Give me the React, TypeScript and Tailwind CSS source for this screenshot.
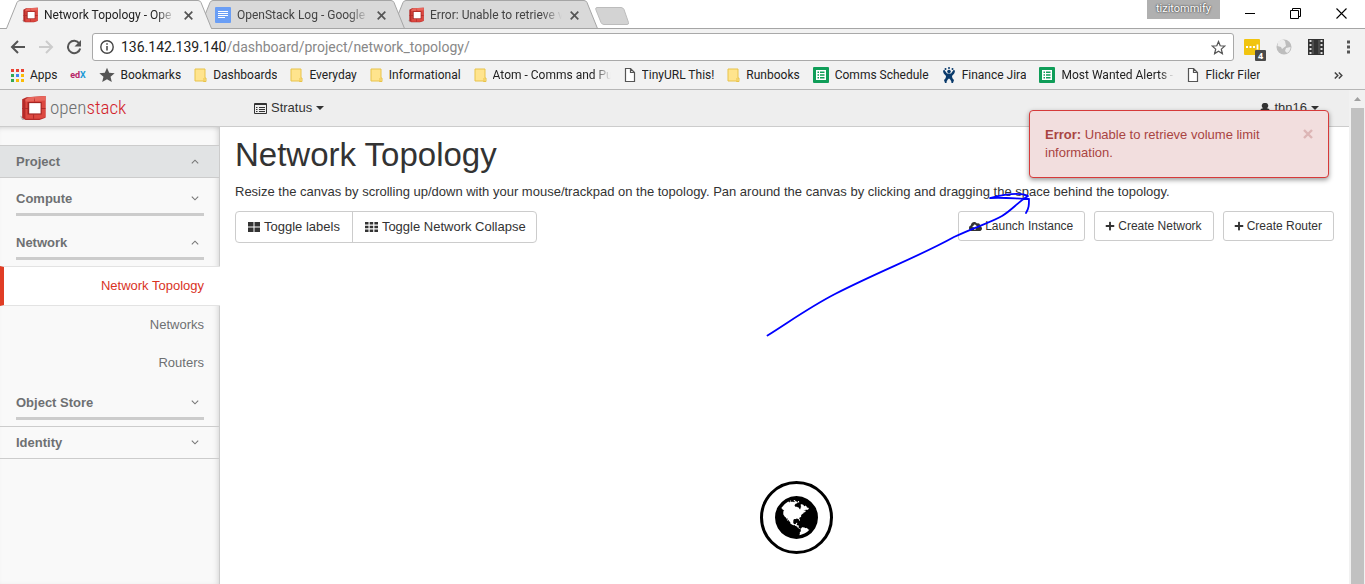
import React from "react";
import { FaPlus, FaCloudUploadAlt } from "react-icons/fa";

function CubeLogo({ className }: { className: string }) {
  return (
    <svg viewBox="0 0 24 24" className={className} aria-hidden="true">
      <path d="M0 19l4 2v2H2z" fill="#b5b5b5" />
      <path d="M2 4l4-2 17.500-1v20L18 23H5l-3-2z" fill="#b52a28" />
      <path d="M5 4l18.500-3v19.500L18 22H5z" fill="#dc4840" />
      <path d="M5 4l3-2 15.500-1v4L5 6z" fill="#e8675d" />
      <path d="M2 12h6v1H2zM19 12h4.500v1H19zM13 2l1 4h-1zM12 18h1v4h-1z" fill="#b02c2a" />
      <path d="M7 6.500h13V18H7z" fill="#a12321" />
      <path d="M8.500 7.500H19V17H8.500z" fill="#fff" />
    </svg>
  );
}

function FolderIcon() {
  return (
    <svg viewBox="0 0 13 15" className="h-[15px] w-[13px] shrink-0" aria-hidden="true">
      <path d="M1 1h10v9h1v3.500h-2.500v-.5H1z" fill="#ffe48d" stroke="#e8c34a" />
      <path d="M10 10v3.500" stroke="#e8c34a" />
    </svg>
  );
}

function PageIcon() {
  return (
    <svg viewBox="0 0 12 14" className="h-[14px] w-3 shrink-0" aria-hidden="true">
      <path d="M1.500.5h5l4 4v9h-9zM6.500.5v4h4" fill="#fff" stroke="#555" strokeWidth="1.200" />
    </svg>
  );
}

function SheetIcon() {
  return (
    <svg viewBox="0 0 16 16" className="size-4 shrink-0" aria-hidden="true">
      <rect width="16" height="16" rx="1" fill="#0f9d58" />
      <path d="M3 3h10v10H3z" fill="#fff" />
      <path d="M4.500 4.500H6V6H4.500zM7 4.500h4.500V6H7zM4.500 7.200H6v1.500H4.500zM7 7.200h4.500v1.500H7zM4.500 10H6v1.500H4.500zM7 10h4.500v1.500H7z" fill="#0f9d58" />
    </svg>
  );
}

function JiraIcon() {
  return (
    <svg viewBox="0 0 14 16" className="h-4 w-[14px] shrink-0" aria-hidden="true">
      <g fill="#0a3a6b">
        <circle cx="3.500" cy="2" r="1" />
        <circle cx="7" cy="1" r="1" />
        <circle cx="10.500" cy="2" r="1" />
        <circle cx="7" cy="4.500" r="1.800" />
        <path d="M1 3.500l1.500-.5 2.500 3.500h4L11.500 3l1.500.5c0 2.500-1.500 4-3 5.500 0 2 1 3 2 4l-1 3H9.500c0-2-1-3.500-2.500-4.500-1.500 1-2.500 2.500-2.500 4.500H3l-1-3c1-1 2-2 2-4C2.500 7.500 1 6 1 3.500z" />
      </g>
    </svg>
  );
}

function AppsIcon() {
  const colors = ["#ea4335", "#ea4335", "#ea4335", "#34a853", "#4285f4", "#fbbc05", "#34a853", "#fbbc05", "#fbbc05"];
  return (
    <svg viewBox="0 0 13 13" className="size-[13px] shrink-0" aria-hidden="true">
      {colors.map((c, i) => (
        <rect key={i} x={(i % 3) * 5} y={Math.floor(i / 3) * 5} width="3" height="3" fill={c} />
      ))}
    </svg>
  );
}

function StarIcon() {
  return (
    <svg viewBox="0 0 24 24" className="size-4 shrink-0" aria-hidden="true">
      <path d="M12 1l3.300 7.500 8.200.7-6.200 5.400 1.900 8L12 18.300l-7.200 4.300 1.900-8L.5 9.200l8.200-.7z" fill="#555" />
    </svg>
  );
}

function DocIcon() {
  return (
    <svg viewBox="0 0 16 16" className="size-4 shrink-0" aria-hidden="true">
      <rect width="16" height="16" rx="1" fill="#6a9ef5" />
      <path d="M3 4.500h10M3 6.500h10M3 8.500h10M3 10.500h7" stroke="#fff" />
    </svg>
  );
}

type TabProps = { title: string; icon: React.ReactNode; active?: boolean; layer: string };

function Tab({ title, icon, active, layer }: TabProps) {
  return (
    <div className={`relative -ml-[13px] flex h-[29px] w-[206px] items-center pt-[1px] pl-4 ${layer}`}>
      <svg viewBox="0 0 206 29" className="absolute inset-0 h-[29px] w-[206px]" aria-hidden="true">
        <path d="M.5 28.500L11 2.500Q12 .5 14 .5H192Q194 .5 195 2.500L205.500 28.500" fill={active ? "#f2f2f2" : "#d9d9d9"} stroke="#a5a5a5" />
        {active ? <path d="M1 28.500h204" stroke="#f2f2f2" /> : <path d="M0 28.500h206" stroke="#a5a5a5" />}
      </svg>
      <span className="relative">{icon}</span>
      <span className={`relative ml-[6px] w-[132px] overflow-hidden whitespace-nowrap [mask-image:linear-gradient(to_right,#000_85%,transparent)] ${active ? "text-[#222]" : "text-[#444]"}`}>
        {title}
      </span>
      <button type="button" aria-label="Close tab" className="relative ml-2">
        <svg viewBox="0 0 9 9" className="size-[9px]" aria-hidden="true">
          <path d="M.7.7l7.600 7.600M8.300.7L.7 8.300" stroke="#555" strokeWidth="1.700" />
        </svg>
      </button>
    </div>
  );
}

const bookmarks: { label: string; icon: React.ReactNode; fade?: string }[] = [
  { label: "Bookmarks", icon: <StarIcon /> },
  { label: "Dashboards", icon: <FolderIcon /> },
  { label: "Everyday", icon: <FolderIcon /> },
  { label: "Informational", icon: <FolderIcon /> },
  { label: "Atom - Comms and Pu", icon: <FolderIcon />, fade: "w-[118px] [mask-image:linear-gradient(to_right,#000_85%,transparent)]" },
  { label: "TinyURL This!", icon: <PageIcon /> },
  { label: "Runbooks", icon: <FolderIcon /> },
  { label: "Comms Schedule", icon: <SheetIcon /> },
  { label: "Finance Jira", icon: <JiraIcon /> },
  { label: "Most Wanted Alerts -", icon: <SheetIcon />, fade: "w-[113px] [mask-image:linear-gradient(to_right,#000_88%,transparent)]" },
  { label: "Flickr Filer", icon: <PageIcon /> },
];

function BrowserChrome() {
  return (
    <div className="font-[Roboto,sans-serif] text-xs text-[#222]">
      <div className="relative flex h-[29px] bg-white pl-[19px]">
        <div className="absolute inset-x-0 bottom-0 h-px bg-[#a5a5a5]" />
        <Tab title="Network Topology - Ope" icon={<CubeLogo className="size-4" />} active layer="z-30" />
        <Tab title="OpenStack Log - Google" icon={<DocIcon />} layer="z-20" />
        <Tab title="Error: Unable to retrieve v" icon={<CubeLogo className="size-4" />} layer="z-10" />
        <button type="button" aria-label="New tab" className="relative mt-[7px] -ml-[3px] h-[18px]">
          <svg viewBox="0 0 34 18" className="h-[18px] w-[34px]" aria-hidden="true">
            <path d="M2 .5h24q2 0 3 2l4.500 13q.5 2-1.500 2H9q-2 0-3-2L.8 2.500Q.3.5 2 .5z" fill="#d3d3d3" stroke="#bcbcbc" />
          </svg>
        </button>
        <div className="ml-auto flex h-[19px] w-[73px] items-center justify-center bg-[#b0b0b0] text-[11px] text-white [text-shadow:0_0_2px_#000]">
          tizitommify
        </div>
        <div className="flex h-[26px] items-center gap-[35px] pr-[18px] pl-6">
          <button type="button" aria-label="Minimize">
            <svg viewBox="0 0 11 11" className="size-[11px]" aria-hidden="true"><path d="M1 5.500h10" stroke="#000" /></svg>
          </button>
          <button type="button" aria-label="Restore">
            <svg viewBox="0 0 11 11" className="size-[11px]" aria-hidden="true"><path d="M.5 2.500h8v8h-8zM2.500 2.500v-2h8v8h-2" fill="none" stroke="#000" /></svg>
          </button>
          <button type="button" aria-label="Close">
            <svg viewBox="0 0 11 11" className="size-[11px]" aria-hidden="true"><path d="M.5.500l10 10M10.500.500l-10 10" stroke="#000" strokeWidth="1.100" /></svg>
          </button>
        </div>
      </div>

      <div className="flex h-[36px] items-center bg-[#f2f2f2] pr-3 pl-[10px]">
        <button type="button" aria-label="Back">
          <svg viewBox="0 0 16 16" className="size-4" aria-hidden="true"><path d="M15 8H2M8 2L2 8l6 6" fill="none" stroke="#555" strokeWidth="2" /></svg>
        </button>
        <button type="button" aria-label="Forward" className="ml-3">
          <svg viewBox="0 0 16 16" className="size-4" aria-hidden="true"><path d="M1 8h13M8 2l6 6-6 6" fill="none" stroke="#ccc" strokeWidth="2" /></svg>
        </button>
        <button type="button" aria-label="Reload" className="ml-3">
          <svg viewBox="0 0 16 16" className="size-4" aria-hidden="true">
            <path d="M13.300 4.500A6.200 6.200 0 1 0 14.200 9.500" fill="none" stroke="#555" strokeWidth="2" />
            <path d="M15 1v6.500H8.500z" fill="#555" />
          </svg>
        </button>
        <div className="ml-[10px] flex h-7 min-w-0 flex-1 items-center rounded-[3px] border border-[#a9a9a9] bg-white pr-[7px] pl-[7px]">
          <svg viewBox="0 0 14 14" className="size-[14px]" aria-hidden="true">
            <circle cx="7" cy="7" r="6.200" fill="none" stroke="#444" strokeWidth="1.400" />
            <path d="M7 6v4.500M7 3.300v1.500" stroke="#444" strokeWidth="1.500" />
          </svg>
          <div className="ml-[7px] flex-1 text-sm text-[#888]">
            <span className="text-[#222]">136.142.139.140</span>/dashboard/project/network_topology/
          </div>
          <svg viewBox="0 0 24 24" className="size-[15px]" aria-hidden="true">
            <path d="M12 2.500l2.700 6.700 7.300.6-5.500 4.800 1.700 7.100L12 17.900l-6.200 3.800 1.700-7.100L2 9.800l7.300-.6z" fill="none" stroke="#555" strokeWidth="2" />
          </svg>
        </div>
        <svg viewBox="0 -6 23 28" className="ml-[9px] h-7 w-[23px]" aria-hidden="true">
          <rect x="1" width="16" height="16" rx="1" fill="#f1c40f" />
          <path d="M3 8h2M6.500 8h2M10 8h2M14.500 5.500v5" stroke="#fff" strokeWidth="1.800" />
          <rect x="12" y="11" width="11" height="11" rx="1" fill="#4a4a4a" />
          <text x="15" y="20" fill="#fff" fontSize="9" fontWeight="700" fontFamily="Open Sans">4</text>
        </svg>
        <svg viewBox="0 0 16 16" className="ml-[10px] size-4" aria-hidden="true">
          <circle cx="8" cy="8" r="7.500" fill="#bdbdbd" />
          <path d="M2 3q4-4 7-1l1 5-4 3L5 8 1.500 7zM10 9l4.500-1q0 4-3.500 6l-2-2z" fill="#ededed" />
        </svg>
        <svg viewBox="0 0 16 16" className="ml-4 size-4" aria-hidden="true">
          <path d="M0 0h16v16H0z" fill="#333" />
          <path d="M2.500 1v14M13.500 1v14" stroke="#ddd" strokeWidth="2" strokeDasharray="2 2" />
          <path d="M5 1v14M11 1v14" stroke="#666" />
        </svg>
        <svg viewBox="0 0 3 14" className="mr-[3px] ml-[23px] h-[14px] w-[3px]" aria-hidden="true">
          <path d="M0 .5h3v3H0zM0 5.500h3v3H0zM0 10.500h3v3H0z" fill="#555" />
        </svg>
      </div>

      <nav aria-label="Bookmarks" className="flex h-[25px] items-center gap-[13px] border-b border-[#b6b6b6] bg-[#f2f2f2] pb-1 pl-[11px]">
        <a href="#apps" className="flex items-center gap-[6px]"><AppsIcon />Apps</a>
        <a href="#edx" className="flex w-[15px] justify-center text-[9px] font-bold text-[#b72667]">ed<span className="text-[#1e9ad6]">X</span></a>
        {bookmarks.map((b) => (
          <a key={b.label} href="#bookmark" className="flex items-center gap-[6px] whitespace-nowrap">
            {b.icon}
            <span className={`overflow-hidden ${b.fade ?? ""}`}>{b.label}</span>
          </a>
        ))}
        <button type="button" aria-label="More bookmarks" className="mr-[22px] ml-auto">
          <svg viewBox="0 0 9 7" className="h-[7px] w-[9px]" aria-hidden="true"><path d="M.8.5l3 3-3 3M4.800.5l3 3-3 3" fill="none" stroke="#444" strokeWidth="1.500" /></svg>
        </button>
      </nav>
    </div>
  );
}

function Chevron({ up }: { up?: boolean }) {
  return (
    <svg viewBox="0 0 8 5" className="h-[5px] w-2" aria-hidden="true">
      <path d={up ? "M.8 4.300L4 1.200l3.200 3.100" : "M.8.700L4 3.800 7.200.7"} fill="none" stroke="#777" strokeWidth="1.100" />
    </svg>
  );
}

function Caret() {
  return (
    <svg viewBox="0 0 8 4" className="h-1 w-2" aria-hidden="true"><path d="M0 0h8L4 4z" fill="#333" /></svg>
  );
}

function Group({ label, open }: { label: string; open?: boolean }) {
  return (
    <button type="button" aria-expanded={!!open} className="mr-[15px] ml-4 flex h-[38px] items-center justify-between border-b-[3px] border-[#ccc] pt-[6px] pr-[5px] font-bold">
      {label}
      <Chevron up={open} />
    </button>
  );
}

function Sidebar() {
  return (
    <nav aria-label="Project" className="flex w-[220px] shrink-0 flex-col border-r border-[#ccc] bg-[#f9f9f9] pt-[18px] text-[#6e7072] shadow-[inset_-4px_0_6px_-3px_#00000022,inset_0_4px_5px_-3px_#00000022]">
      <button type="button" aria-expanded="true" className="flex h-[33px] items-center justify-between border-y border-[#ccc] bg-[#e1e3e4] pr-5 pl-4 font-bold">
        Project
        <Chevron up />
      </button>
      <div className="flex flex-col gap-[6px]">
        <Group label="Compute" />
        <Group label="Network" open />
      </div>
      <a href="#topology" className="mt-[6px] -mr-px flex h-10 items-center justify-end border-y border-l-4 border-y-[#e3e3e3] border-l-[#e03d25] bg-white pr-4 text-[#d9331f]">
        Network Topology
      </a>
      <a href="#networks" className="flex h-[38px] items-center justify-end pr-[15px]">Networks</a>
      <a href="#routers" className="flex h-[38px] items-center justify-end pr-[15px]">Routers</a>
      <Group label="Object Store" />
      <button type="button" aria-expanded="false" className="mt-[6px] flex h-[33px] items-center justify-between border-y border-[#ccc] pr-5 pl-4 font-bold">
        Identity
        <Chevron />
      </button>
    </nav>
  );
}

const actionClass = "flex h-[30px] items-center gap-[3px] rounded-[3px] border border-[#ccc] bg-white pr-[11px] pl-[10px] text-xs";

function GlobeNode() {
  return (
    <div className="absolute top-[354px] left-[540px] flex size-[73px] items-center justify-center rounded-full border-[3px] border-black">
      <svg viewBox="0 128 1536 1536" className="size-[43px]" role="img" aria-label="External network">
        <path d="M768 128q209 0 385.500 103t279.500 279.500 103 385.500-103 385.500-279.500 279.500-385.500 103-385.500-103-279.500-279.500-103-385.500 103-385.500 279.500-279.500 385.500-103zm274 521q-2 1-9.500 9.500t-13.500 9.500q2 0 4.500-5t5-11 3.500-7q6-7 22-15 14-6 52-12 34-8 51 11-2-2 9.500-13t14.500-12q3-2 15-4.500t15-7.500l2-22q-12 1-17.500-7t-6.500-21q0 2-6 8 0-7-4.500-8t-11.500 1-9 1q-10-3-15-7.500t-8-16.500-4-15q-2-5-9.500-11t-9.500-10q-1-2-2.500-5.500t-3-6.500-4-5.500-5.500-2.500-7 5-7.500 10-4.500 5q-3-2-6-1.500t-4.500 1-4.500 3-5 3.500q-3 2-8.500 3t-8.500 2q15-5-1-11-10-4-16-3 9-4 7.500-12t-8.500-14h5q-1-4-8.500-8.500t-17.500-8.500-13-6q-8-5-34-9.500t-33-.5q-5 6-4.500 10.500t4 14 3.500 12.500q1 6-5.500 13t-6.500 12q0 7 14 15.500t10 21.500q-3 8-16 16t-16 12q-5 8-1.500 18.500t10.500 16.500q2 2 1.500 4t-3.500 4.500-5.500 4-6.500 3.500l-3 2q-11 5-20.500-6t-13.500-26q-7-25-16-30-23-8-29 1-5-13-41-26-25-9-58-4 6-1 0-15-7-15-19-12 3-6 4-17.500t1-13.500q3-13 12-23 1-1 7-8.500t9.500-13.500.5-6q35 4 50-11 5-5 11.500-17t10.500-17q9-6 14-5.500t14.500 5.500 14.500 5q14 1 15.500-11t-7.500-20q12 1 3-17-4-7-8-9-12-4-27 5-8 4 2 8-1-1-9.500 10.500t-16.500 17.500-16-5q-1-1-5.500-13.500t-9.500-13.500q-8 0-16 15 3-8-11-15t-24-8q19-12-8-27-7-4-20.500-5t-19.500 4q-5 7-5.500 11.500t5 8 10.500 5.500 11.500 4 8.500 3q14 10 8 14-2 1-8.500 3.500t-11.500 4.500-6 4q-3 4 0 14t-2 14q-5-5-9-17.500t-7-16.500q7 9-25 6l-10-1q-4 0-16 2t-20.500 1-13.500-8q-4-8 0-20 1-4 4-2-4-3-11-9.500t-10-8.500q-46 15-94 41 6 1 12-1 5-2 13-6.500t10-5.500q34-14 42-7l5-5q14 16 20 25-7-4-30-1-20 6-22 12 7 12 5 18-4-3-11.500-10t-14.500-11-15-5q-16 0-22 1-146 80-235 222 7 7 12 8 4 1 5 9t2.500 11 11.500-3q9 8 3 19 1-1 44 27 19 17 21 21 3 11-10 18-1-2-9-9t-9-4q-3 5 .5 18.500t10.500 12.500q-7 0-9.500 16t-2.500 35.500-1 23.500l2 1q-3 12 5.500 34.500t21.500 19.500q-13 3 20 43 6 8 8 9 3 2 12 7.500t15 10 10 10.500q4 5 10 22.500t14 23.500q-2 6 9.500 20t10.500 23q-1 0-2.500 1t-2.500 1q3 7 15.500 14t15.500 13q1 3 2 10t3 11 8 2q2-20-24-62-15-25-17-29-3-5-5.500-15.500t-4.500-14.500q2 0 6 1.500t8.500 3.500 7.500 4 2 3q-3 7 2 17.500t12 18.500 17 19 12 13q6 6 14 19.500t0 13.500q9 0 20 10.500t17 19.500q5 8 8 26t5 24q2 7 8.500 13.500t12.500 9.500l16 8 13 7q5 2 18.500 10.500t21.500 11.500q10 4 16 4t14.500-2.500 13.500-3.500q15-2 29 15t21 21q36 19 55 11-2 1 .5 7.500t8 15.500 9 14.500 5.500 8.500q5 6 18 15t18 15q6-4 7-9-3 8 7 20t18 10q14-3 14-32-31 15-49-18 0-1-2.500-5.500t-4-8.500-2.500-8.500 0-7.500 5-3q9 0 10-3.500t-2-12.500-4-13q-1-8-11-20t-12-15q-5 9-16 8t-16-9q0 1-1.500 5.500t-1.500 6.500q-13 0-15-1 1-3 2.500-17.500t3.500-22.500q1-4 5.500-12t7.500-14.500 4-12.500-4.500-9.500-17.500-2.500q-19 1-26 20-1 3-3 10.500t-5 11.500-9 7q-7 3-24 2t-24-5q-13-8-22.500-29t-9.500-37q0-10 2.500-26.500t3-25-5.500-24.500q3-2 9-9.500t10-10.500q2-1 4.500-1.500t4.500 0 4-1.500 3-6q-1-1-4-3-3-3-4-3 7 3 28.500-1.500t27.500 1.500q15 11 22-2 0-1-2.500-9.500t-.5-13.500q5 27 29 9 3 3 15.500 5t17.500 5q3 2 7 5.500t5.500 4.500 5-.5 8.500-6.500q10 14 12 24 11 40 19 44 7 3 11 2t4.500-9.500 0-14-1.500-12.500l-1-8v-18l-1-8q-15-3-18.500-12t1.500-18.500 15-18.500q1-1 8-3.500t15.500-6.500 12.500-8q21-19 15-35 7 0 11-9-1 0-5-3t-7.500-5-4.500-2q9-5 2-16 5-3 7.500-11t7.500-10q9 12 21 2 7-8 1-16 5-7 20.500-10.500t18.500-9.500q7 2 8-2t1-12 3-12q4-5 15-9t13-5l17-11q3-4 0-4 18 2 31-11 10-11-6-20 3-6-3-9.500t-15-5.500q3-1 11.500-.5t10.500-1.500q15-10-7-16-17-5-43 12zm-163 877q206-36 351-189-3-3-12.500-4.500t-12.500-3.500q-18-7-24-8 1-7-2.500-13t-8-9-12.500-8-11-7q-2-2-7-6t-7-5.500-7.500-4.500-8.500-2-10 1l-3 1q-3 1-5.500 2.500t-5.500 3-4 3 0 2.500q-21-17-36-22-5-1-11-5.500t-10.500-7-10-1.500-11.500 7q-5 5-6 15t-2 13q-7-5 0-17.500t2-18.500q-3-6-10.500-4.500t-12 4.500-11.500 8.500-9 6.500-8.500 5.500-8.500 7.500q-3 4-6 12t-5 11q-2-4-11.500-6.500t-9.500-5.500q2 10 4 35t5 38q7 31-12 48-27 25-29 40-4 22 12 26 0 7-8 20.500t-7 21.500q0 6 2 16z" />
      </svg>
    </div>
  );
}

export default function App() {
  return (
    <div className="relative flex min-h-screen flex-col overflow-hidden bg-white font-['Liberation_Sans',Arial,sans-serif] text-[13px] leading-[18px] text-[#333]">
      <BrowserChrome />
      <div className="flex flex-1">
        <div className="flex min-w-0 flex-1 flex-col">
          <header className="flex h-[37px] shrink-0 items-center border-b border-[#ccc] bg-[#eee] pl-5">
            <a href="#home" className="flex w-[234px] items-center gap-1">
              <CubeLogo className="size-[26px]" />
              <span className="font-['Roboto_Condensed','Open_Sans_Condensed',sans-serif] text-[19px] font-light text-[#6d6e70]">
                open<span className="text-[#d2232a]">stack</span>
              </span>
            </a>
            <button type="button" className="flex items-center gap-1">
              <svg viewBox="0 0 13 11" className="h-[11px] w-[13px]" aria-hidden="true">
                <path d="M.5.5h12v10H.5z" fill="none" stroke="#333" />
                <path d="M1 1.500h11M2 4.500h1.500M5 4.500h6M2 6.500h1.500M5 6.500h6M2 8.500h1.500M5 8.500h6" stroke="#333" />
              </svg>
              Stratus
              <Caret />
            </button>
            <button type="button" className="mr-[30px] ml-auto flex items-center gap-1">
              <svg viewBox="0 0 10 11" className="h-[11px] w-[10px]" aria-hidden="true">
                <path d="M5 0a2.800 2.800 0 0 1 1.800 5.200Q10 5.500 10 9q0 2-1.500 2h-7Q0 11 0 9q0-3.500 3.200-3.800A2.800 2.800 0 0 1 5 0z" fill="#333" />
              </svg>
              thn16
              <Caret />
            </button>
          </header>
          <div className="flex flex-1">
            <Sidebar />
            <main className="relative min-w-0 flex-1 px-[15px]">
              <h1 className="pt-2 text-[33px] leading-10">Network Topology</h1>
              <p className="pt-2 whitespace-nowrap">
                Resize the canvas by scrolling up/down with your mouse/trackpad on the topology. Pan around the canvas by clicking and dragging the space behind the topology.
              </p>
              <div className="flex items-start justify-between pt-[10px]">
                <div className="flex h-8 rounded-[4px] border border-[#ccc]">
                  <button type="button" className="flex items-center gap-1 border-r border-[#ccc] px-3">
                    <svg viewBox="0 0 12 10" className="h-[10px] w-3" aria-hidden="true"><path d="M0 0h5.500v4.500H0zM6.500 0H12v4.500H6.500zM0 5.500h5.500V10H0zM6.500 5.500H12V10H6.500z" fill="#333" /></svg>
                    Toggle labels
                  </button>
                  <button type="button" className="flex items-center gap-1 pr-[10px] pl-3">
                    <svg viewBox="0 0 13 10" className="h-[10px] w-[13px]" aria-hidden="true"><path d="M0 0h3.500v2.600H0zM4.700 0h3.500v2.600H4.700zM9.400 0H13v2.600H9.400zM0 3.700h3.500v2.600H0zM4.700 3.700h3.500v2.600H4.700zM9.400 3.700H13v2.600H9.400zM0 7.400h3.500V10H0zM4.700 7.400h3.500V10H4.700zM9.400 7.400H13V10H9.400z" fill="#333" /></svg>
                    Toggle Network Collapse
                  </button>
                </div>
                <div className="flex gap-[9px]">
                  <button type="button" className={actionClass}><FaCloudUploadAlt className="size-[13px]" />Launch Instance</button>
                  <button type="button" className={actionClass}><FaPlus className="size-[10px]" />Create Network</button>
                  <button type="button" className={actionClass}><FaPlus className="size-[10px]" />Create Router</button>
                </div>
              </div>
              <GlobeNode />
            </main>
          </div>
        </div>
        <div className="flex w-4 shrink-0 flex-col items-center bg-[#f1f1f1]" aria-hidden="true">
          <svg viewBox="0 0 7 4" className="my-[7px] h-1 w-[7px] shrink-0"><path d="M0 4h7L3.500 0z" fill="#a0a0a0" /></svg>
          <div className="w-[13px] flex-1 bg-[#c1c1c1]" />
        </div>
      </div>

      <div role="alert" className="absolute top-[110px] right-9 z-40 flex h-[68px] w-[300px] items-start rounded-[4px] border border-[#d63a3a] bg-[#f2dede] py-[15px] pr-[15px] pl-[15px] text-[#a94442] shadow-[0_2px_5px_#00000066]">
        <p className="flex-1"><strong>Error:</strong> Unable to retrieve volume limit information.</p>
        <button type="button" aria-label="Dismiss" className="mt-[3px]">
          <svg viewBox="0 0 10 10" className="size-[10px]" aria-hidden="true"><path d="M1 1l8 8M9 1L1 9" stroke="#dcb5b5" strokeWidth="2.400" /></svg>
        </button>
      </div>
      <svg viewBox="0 0 280 160" className="pointer-events-none absolute top-[185px] left-[760px] z-50 h-40 w-[280px]" aria-hidden="true">
        <path d="M7.500 150.500C35 133 50 122 75 109C120 86 160 71 194 52C215 42 232 37 242 31C252 25 258 17 268 11C262 8 250 8 230 13C245 12 258 14 269 14C269 20 269 23 266 28" fill="none" stroke="#0000ff" strokeWidth="1.800" strokeLinecap="round" strokeLinejoin="round" />
      </svg>
    </div>
  );
}
